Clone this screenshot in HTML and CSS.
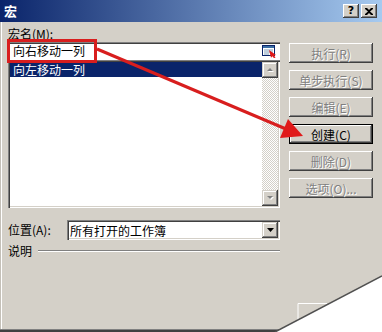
FILE: index.html
```html
<!DOCTYPE html>
<html lang="zh-CN">
<head>
    <meta charset="UTF-8">
    <title>宏</title>
    <link rel="stylesheet" href="styles.css">
</head>
<body>

<!-- Окно "宏" -->
<div class="window">
    <div class="titlebar">
        <span class="title">宏</span>
        <div class="caption-btns">
            <span class="cap-btn cap-help">?</span>
            <span class="cap-btn">
                <svg width="8" height="7" viewBox="0 0 8 7"><path d="M0 0h2l2 2 2-2h2v1L5 3.5 8 6v1H6L4 5 2 7H0V6l3-2.5L0 1z" fill="#000"/></svg>
            </span>
        </div>
    </div>

    <div class="content">
        <div class="left-col">
            <div class="label">宏名(M):</div>
            <div class="name-field">
                <span class="field-text">向右移动一列</span>
                <svg class="ref-icon" width="16" height="14" viewBox="0 0 16 14">
                    <rect x="0.5" y="1.5" width="12" height="10" fill="#fff" stroke="#0a246a"/>
                    <rect x="1" y="2" width="11" height="2" fill="#3a6ea5"/>
                    <path d="M2 6h9M2 8h9M2 10h5" stroke="#7f9db9"/>
                    <path d="M7 6l7 5-2 .5 1.5 2-1.5.8-1.5-2-1.5 1.5z" fill="#e01818"/>
                </svg>
            </div>
            <div class="listbox">
                <div class="list-items">
                    <div class="list-row selected">向左移动一列</div>
                </div>
                <div class="scrollbar">
                    <div class="sb-btn">
                        <svg width="7" height="5" viewBox="0 0 7 5"><path d="M1 4h6L4 1z" fill="#fff"/><path d="M0 3h6L3 0z" fill="#808080"/></svg>
                    </div>
                    <div class="sb-track"></div>
                    <div class="sb-btn">
                        <svg width="7" height="5" viewBox="0 0 7 5"><path d="M1 1h6L4 4z" fill="#fff"/><path d="M0 0h6L3 3z" fill="#808080"/></svg>
                    </div>
                </div>
            </div>

            <div class="location">
                <span class="label loc-label">位置(A):</span>
                <div class="combo">
                    <span class="combo-text">所有打开的工作簿</span>
                    <div class="sb-btn combo-btn">
                        <svg width="7" height="4" viewBox="0 0 7 4"><path d="M0 0h7L3.5 4z" fill="#000"/></svg>
                    </div>
                </div>
            </div>

            <div class="desc">
                <span class="label">说明</span>
                <div class="etched"></div>
            </div>
        </div>

        <div class="buttons">
            <button class="btn" disabled>执行(R)</button>
            <button class="btn" disabled>单步执行(S)</button>
            <button class="btn" disabled>编辑(E)</button>
            <button class="btn btn-default">创建(C)</button>
            <button class="btn" disabled>删除(D)</button>
            <button class="btn" disabled>选项(O)...</button>
        </div>
    </div>

    <!-- пометки поверх окна -->
    <svg class="annotation" width="382" height="332" viewBox="0 0 382 332">
        <rect x="8.5" y="40.5" width="87" height="21" fill="none" stroke="#d81e1e" stroke-width="3"/>
        <line x1="97" y1="49" x2="286" y2="129" stroke="#d81e1e" stroke-width="3"/>
        <polygon points="303,136 280,138 288,119" fill="#e01a1a"/>
    </svg>

    <!-- загнутый угол -->
    <svg class="peel" width="382" height="332" viewBox="0 0 382 332">
        <path d="M298 320V303.5H327" fill="none" stroke="#fff" stroke-width="1"/>
        <polygon points="275,332 382,276 382,332" fill="#fff"/>
        <line x1="275" y1="332" x2="382" y2="276" stroke="#505050" stroke-width="1.5"/>
    </svg>
</div>

</body>
</html>
```

FILE: styles.css
```css
body {
    margin: 0;
    background: #fff;
    font-family: "Noto Sans CJK SC", "Noto Sans", sans-serif;
    font-size: 12px;
    color: #000;
}
.window {
    position: relative;
    width: 382px;
    height: 332px;
    box-sizing: border-box;
    overflow: hidden;
    background: #d4d0c8;
    box-shadow: inset 0 -2px #404040, inset 0 -3px #808080, inset 1px 0 #c4c0b8, inset 2px 0 #fff;
}
.titlebar {
    height: 22px;
    display: flex;
    align-items: center;
    justify-content: space-between;
    padding: 0 5px 0 4px;
    background: linear-gradient(to right, #0a246a, #a6caf0);
}
.title {
    color: #fff;
    font-weight: bold;
    font-size: 13px;
    line-height: 14px;
}
.caption-btns {
    display: flex;
    gap: 2px;
}
.cap-btn {
    width: 16px;
    height: 14px;
    display: flex;
    align-items: center;
    justify-content: center;
    background: #d4d0c8;
    box-shadow: inset -1px -1px #404040, inset 1px 1px #fff, inset -2px -2px #808080;
}
.cap-help {
    font-family: "DejaVu Sans", sans-serif;
    font-weight: bold;
    font-size: 11px;
    line-height: 14px;
}
.content {
    display: flex;
    gap: 9px;
    padding: 4px 9px 0 8px;
}
.left-col {
    width: 272px;
}
.label {
    line-height: 16px;
    height: 16px;
}
.name-field {
    height: 18px;
    box-sizing: border-box;
    display: flex;
    align-items: center;
    justify-content: space-between;
    padding: 0 2px 0 5px;
    background: #fff;
    box-shadow: inset 1px 1px #808080, inset 2px 2px #404040;
}
.field-text {
    line-height: 16px;
}
.listbox {
    height: 148px;
    box-sizing: border-box;
    display: flex;
    padding: 2px;
    background: #fff;
    box-shadow: inset 1px 1px #808080, inset 2px 2px #404040, inset -1px -1px #fff, inset -2px -2px #d4d0c8;
}
.list-items {
    flex: 1;
}
.list-row {
    height: 15px;
    line-height: 15px;
    padding-left: 3px;
}
.list-row.selected {
    background: #0a246a;
    color: #fff;
}
.scrollbar {
    width: 16px;
    display: flex;
    flex-direction: column;
}
.sb-btn {
    width: 16px;
    height: 16px;
    flex: none;
    display: flex;
    align-items: center;
    justify-content: center;
    background: #d4d0c8;
    box-shadow: inset -1px -1px #404040, inset 1px 1px #d4d0c8, inset -2px -2px #808080, inset 2px 2px #fff;
}
.sb-track {
    flex: 1;
    background: repeating-conic-gradient(#fff 0 25%, #d4d0c8 0 50%) 0 0 / 2px 2px;
}
.location {
    display: flex;
    align-items: center;
    margin-top: 12px;
    height: 20px;
}
.loc-label {
    width: 59px;
}
.combo {
    flex: 1;
    height: 20px;
    box-sizing: border-box;
    display: flex;
    align-items: center;
    justify-content: space-between;
    padding: 2px;
    background: #fff;
    box-shadow: inset 1px 1px #808080, inset 2px 2px #404040, inset -1px -1px #fff, inset -2px -2px #d4d0c8;
}
.combo-text {
    padding-left: 1px;
}
.desc {
    display: flex;
    align-items: center;
    margin-top: 3px;
}
.etched {
    flex: 1;
    margin-left: 6px;
    border-top: 1px solid #808080;
    border-bottom: 1px solid #fff;
}
.buttons {
    width: 84px;
    display: flex;
    flex-direction: column;
    gap: 7px;
    padding-top: 17px;
}
.btn {
    height: 20px;
    padding: 0;
    border: none;
    font-family: inherit;
    font-size: 12px;
    color: #000;
    background: #d4d0c8;
    box-shadow: inset -1px -1px #404040, inset 1px 1px #fff, inset -2px -2px #808080;
}
.btn:disabled {
    color: #808080;
    text-shadow: 1px 1px #fff;
}
.btn-default {
    box-shadow: inset 0 0 0 1px #000, inset -2px -2px #404040, inset 2px 2px #fff, inset -3px -3px #808080;
}
.annotation, .peel {
    position: absolute;
    top: 0;
    left: 0;
    pointer-events: none;
}
```
